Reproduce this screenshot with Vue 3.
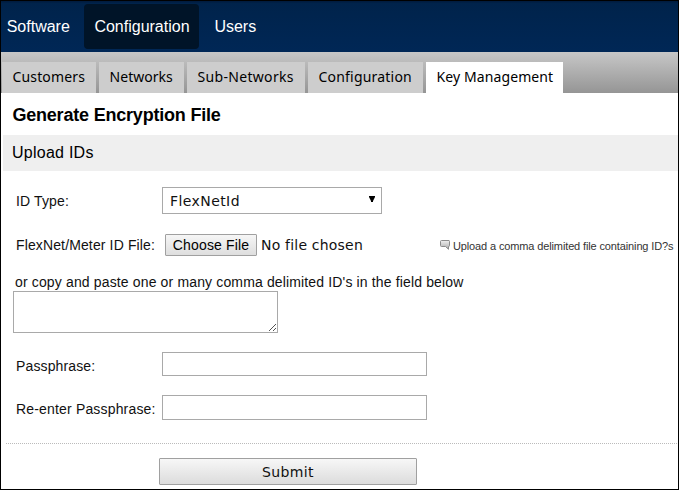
<script setup>
import { ref } from 'vue'

const sections = [
  { label: 'Software', cls: 'software' },
  { label: 'Configuration', cls: 'active' },
  { label: 'Users', cls: 'users' }
]
const tabs = [
  { label: 'Customers', cls: 'customers' },
  { label: 'Networks', cls: 'networks' },
  { label: 'Sub-Networks', cls: 'subnetworks' },
  { label: 'Configuration', cls: 'configuration' },
  { label: 'Key Management', cls: 'keys selected' }
]
const idList = ref('')
const pass = ref('')
const confirm = ref('')
</script>

<template>
  <div class="page">
    <nav class="topnav">
      <a v-for="s in sections" :key="s.label" :class="['section', s.cls]">{{ s.label }}</a>
    </nav>
    <div class="tabs">
      <a v-for="t in tabs" :key="t.label" :class="['tab', t.cls]"><span>{{ t.label }}</span></a>
    </div>
    <h1><span>Generate Encryption File</span></h1>
    <h2><span>Upload IDs</span></h2>
    <form @submit.prevent>
      <div class="row type-row">
        <label>ID Type:</label>
        <div class="select">
          <span>FlexNetId</span>
          <svg width="6" height="6" viewBox="0 0 6 6"><path d="M0 0H6V1L4 5V6H2V5L0 1Z" /></svg>
        </div>
      </div>
      <div class="row file-row">
        <label class="file-label">FlexNet/Meter ID File:</label>
        <button type="button" class="choose">Choose File</button>
        <span class="nofile">No file chosen</span>
        <span class="hint">
          <svg width="11" height="10" viewBox="0 0 11 10">
            <defs>
              <linearGradient id="bubble" x1="0" y1="0" x2="0" y2="1">
                <stop offset="0" stop-color="#f0f0f0" />
                <stop offset="1" stop-color="#a8a8a8" />
              </linearGradient>
            </defs>
            <path d="M1.5 .5H9Q9.5 .5 9.5 1.5V5.5Q9.5 6.5 8.5 6.5V9.3L5.5 6.5H1.5Q.5 6.5 .5 5.5V1.5Q.5 .5 1.5 .5Z" fill="url(#bubble)" stroke="#8c8c8c" />
          </svg>
          <span class="hint-text">Upload a comma delimited file containing ID?s</span>
        </span>
      </div>
      <p class="paste"><span>or copy and paste one or many comma delimited ID's in the field below</span></p>
      <div class="area">
        <textarea v-model="idList"></textarea>
        <svg class="grip" width="7" height="7" viewBox="0 0 7 7" shape-rendering="crispEdges">
          <path d="M0 6h1v1h-1zM1 5h1v1h-1zM2 4h1v1h-1zM3 3h1v1h-1zM4 2h1v1h-1zM5 1h1v1h-1zM6 0h1v1h-1zM4 6h1v1h-1zM5 5h1v1h-1zM6 4h1v1h-1z" />
        </svg>
      </div>
      <div class="row pass-row">
        <label>Passphrase:</label>
        <input v-model="pass" type="password" />
      </div>
      <div class="row confirm-row">
        <label class="confirm-label">Re-enter Passphrase:</label>
        <input v-model="confirm" type="password" />
      </div>
      <div class="divider"></div>
      <button class="submit"><span>Submit</span></button>
    </form>
  </div>
</template>

<style>
body { margin: 0; background: #fff; }
</style>

<style scoped>
* { box-sizing: border-box; }
.page {
  width: 679px; height: 490px; border: 1px solid #000; overflow: hidden;
  background: #fff; color: #000; font-family: "Liberation Sans", Arial, sans-serif;
}
.topnav {
  height: 51px; display: flex; align-items: flex-start; padding-top: 3px;
  background: linear-gradient(#001c3f 0, #001c3f 1px, #00234b 2px, #002756 100%);
}
.section {
  height: 45px; line-height: 45px; font-size: 16px; color: #fff; white-space: nowrap;
}
.software { width: 83px; padding-left: 5.7px; }
.active { width: 115px; padding-left: 10.4px; background: #001428; border-radius: 4px; }
.users { padding-left: 15.4px; }
.tabs {
  height: 41px; padding: 10px 0 0 1px; display: flex; gap: 3px;
  background: linear-gradient(#c7c7c7, #959595);
}
.tab {
  height: 31px; padding-left: 10.5px; line-height: 30px; background: #cdcdcd;
  font-family: "Noto Sans", sans-serif; font-size: 14px; white-space: nowrap;
}
.customers { width: 94px; letter-spacing: .15px; }
.networks { width: 85px; padding-left: 10.6px; letter-spacing: .02px; }
.subnetworks { width: 118px; letter-spacing: .32px; }
.configuration { width: 115px; letter-spacing: .2px; }
.keys { width: 137px; letter-spacing: .1px; }
.selected { background: #fff; }
h1 { margin: 0; height: 42px; padding-left: 11.4px; font-size: 18px; line-height: 44px; letter-spacing: -.2px; }
h2 {
  margin: 0 0 0 2px; height: 36px; padding-left: 9px; background: #efefef;
  font-size: 16px; font-weight: 400; line-height: 35px; letter-spacing: .25px;
}
form { display: flex; flex-direction: column; align-items: flex-start; }
.row { display: flex; align-items: center; }
label { width: 146px; font-size: 14px; letter-spacing: .13px; white-space: nowrap; flex: none; color: #111; }
.type-row, .pass-row, .confirm-row { padding-left: 15px; }
.type-row { margin-top: 16px; height: 27px; }
.select {
  width: 220px; height: 27px; border: 1px solid #a9a9a9; padding: 0 6px 0 7px;
  display: flex; align-items: center; justify-content: space-between;
  font-family: "DejaVu Sans", sans-serif; font-size: 14px; letter-spacing: .42px; color: #111;
}
.select svg { margin-top: -3px; }
.file-row { width: 677px; margin-top: 20px; height: 22px; padding-left: 15px; }
.file-label { width: 149px; }
.choose {
  width: 92px; height: 22px; padding: 0; border: 1px solid #a0a0a0; border-radius: 1px;
  background: linear-gradient(#f6f6f6, #dedede); font-family: "Liberation Sans", Arial, sans-serif;
  font-size: 14px; letter-spacing: .15px; color: #000;
}
.nofile { width: 183px; padding-left: 4px; font-family: "DejaVu Sans", sans-serif; font-size: 14px; letter-spacing: .2px; white-space: nowrap; color: #111; }
.hint { display: flex; align-items: center; gap: 2px; color: #333; font-size: 11px; white-space: nowrap; }
.hint svg { flex: none; }
.hint-text { padding-top: 2px; letter-spacing: -.13px; }
.paste { margin: 17px 0 0 14px; height: 18px; line-height: 19px; font-size: 14px; letter-spacing: .145px; white-space: nowrap; color: #111; }
.area { position: relative; width: 265px; height: 42px; margin: 0 0 0 12px; }
textarea { display: block; width: 265px; height: 42px; border: 1px solid #a9a9a9; padding: 2px; resize: none; background: #fff; }
.grip { position: absolute; right: 2px; bottom: 2px; fill: #555; }
.pass-row { margin-top: 19px; height: 24px; }
.confirm-row { margin-top: 19px; height: 25px; }
.pass-row label { padding-top: 3px; }
.confirm-row label { padding-top: 2px; letter-spacing: .17px; }
input { width: 265px; height: 100%; border: 1px solid #a9a9a9; padding: 1px 4px; background: #fff; }
.divider {
  width: 672px; height: 1px; margin: 23px 0 0 5px;
  background: repeating-linear-gradient(90deg, #bbb 0 1px, #fff 1px 2px);
}
.submit {
  width: 258px; height: 27px; margin: 14px 0 0 158px; padding: 0; border: 1px solid #a0a0a0; border-radius: 1px;
  background: linear-gradient(#f7f7f7, #dcdcdc); font-family: "DejaVu Sans", sans-serif; font-size: 14px; letter-spacing: .35px; color: #111;
}
</style>
